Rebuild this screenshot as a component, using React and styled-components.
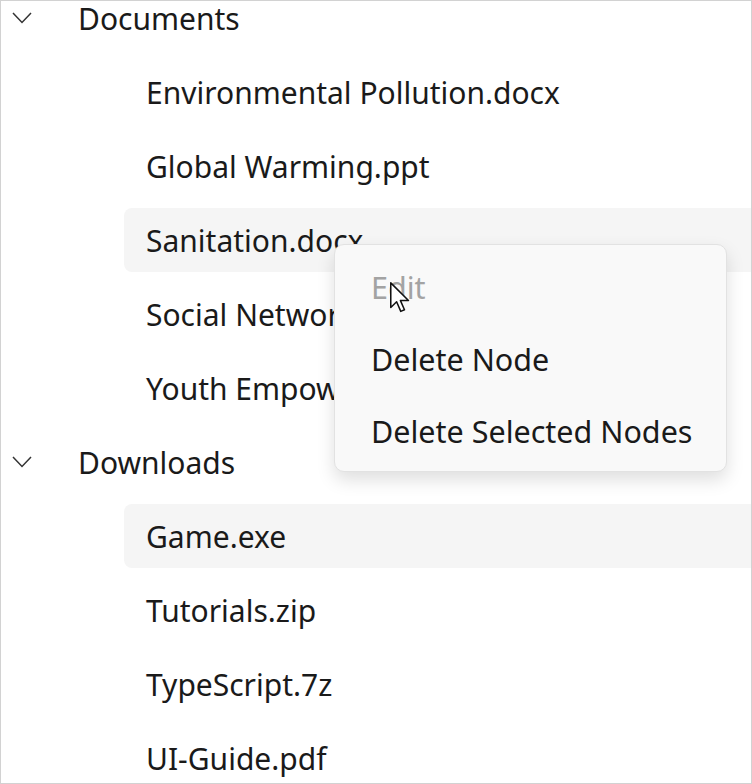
import React from 'react'
import styled, { createGlobalStyle } from 'styled-components'

const GlobalStyle = createGlobalStyle`
  html, body {
    margin: 0;
    padding: 0;
    background: #ffffff;
  }
  * {
    box-sizing: border-box;
  }
`

const Frame = styled.div`
  position: relative;
  width: 752px;
  height: 784px;
  border: 1px solid #d2d2d2;
  background: #ffffff;
  overflow: hidden;
  font-family: 'Noto Sans', 'Open Sans', sans-serif;
  color: #1a1a1a;
`

const Tree = styled.ul`
  list-style: none;
  display: flex;
  flex-direction: column;
  gap: 10px;
  margin: -15px 0 0 0;
  padding: 0;
`

const Row = styled.li`
  display: flex;
  align-items: center;
  flex: none;
  height: 64px;
  margin-left: ${({ indent }) => indent}px;
  padding-left: ${({ indent }) => (indent ? 22 : 11)}px;
  border-radius: 8px 0 0 8px;
  background: ${({ selected }) => (selected ? '#f5f5f5' : 'transparent')};
  font-size: 30px;
  white-space: nowrap;
`

const Chevron = styled.svg`
  width: 20px;
  height: 12px;
  margin-right: 46px;
  flex: none;
`

const Menu = styled.div`
  position: absolute;
  left: 333px;
  top: 243px;
  width: 393px;
  padding: 6px 4px 4px;
  background: #f9f9f9;
  border: 1px solid #e2e2e2;
  border-radius: 10px;
  box-shadow: 0 8px 18px rgba(0, 0, 0, 0.13);
`

const MenuItem = styled.div`
  display: flex;
  align-items: center;
  height: 72px;
  padding-left: 32px;
  font-size: 30.5px;
  color: ${({ disabled }) => (disabled ? '#a3a3a3' : '#1a1a1a')};
  white-space: nowrap;
`

const Cursor = styled.svg`
  position: absolute;
  left: 389px;
  top: 281px;
  width: 20px;
  height: 31px;
`

const groups = [
  {
    name: 'Documents',
    items: [
      'Environmental Pollution.docx',
      'Global Warming.ppt',
      'Sanitation.docx',
      'Social Network.pdf',
      'Youth Empowerment.pdf'
    ]
  },
  {
    name: 'Downloads',
    items: ['Game.exe', 'Tutorials.zip', 'TypeScript.7z', 'UI-Guide.pdf']
  }
]

const selected = ['Sanitation.docx', 'Game.exe']

function ChevronDown() {
  return (
    <Chevron viewBox="0 0 20 12">
      <path d="M1 1 L10 10.5 L19 1" fill="none" stroke="#333" strokeWidth="1.5" />
    </Chevron>
  )
}

export default function App() {
  return (
    <Frame>
      <GlobalStyle />
      <Tree>
        {groups.map(group => (
          <React.Fragment key={group.name}>
            <Row indent={0}>
              <ChevronDown />
              {group.name}
            </Row>
            {group.items.map(item => (
              <Row key={item} indent={123} selected={selected.includes(item)}>
                {item}
              </Row>
            ))}
          </React.Fragment>
        ))}
      </Tree>
      <Menu>
        <MenuItem disabled>Edit</MenuItem>
        <MenuItem>Delete Node</MenuItem>
        <MenuItem>Delete Selected Nodes</MenuItem>
      </Menu>
      <Cursor viewBox="0 0 13 20">
        <path
          d="M0.5 0.5 L0.5 16.5 L4.3 12.8 L7 19 L9.4 18 L6.8 12 L12 12 Z"
          fill="#ffffff"
          stroke="#111111"
          strokeWidth="1"
          strokeLinejoin="round"
        />
      </Cursor>
    </Frame>
  )
}
